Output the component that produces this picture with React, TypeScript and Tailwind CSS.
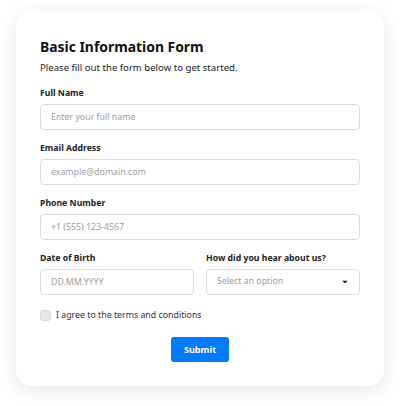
import { useState } from "react";

const labelCls = "block text-[8.7px] leading-[14px] font-bold text-[#222] mb-[4px]";
const fieldCls =
  "block w-full h-[26px] rounded-[4px] border border-[#dcdcdc] bg-white px-[10px] text-[8.8px] focus:outline-none";
const inputCls = fieldCls + " text-[#333] placeholder:text-[#9e9e9e]";

export default function App() {
  const [agree, setAgree] = useState(false);

  return (
    <div className="min-h-[406px] w-[400px] bg-white pt-[11px] px-[16px] font-['Noto_Sans',sans-serif]">
      <div className="rounded-[16px] bg-white px-[24px] pt-[24px] pb-[24px] shadow-[0_4px_20px_rgba(0,0,0,0.10)]">
        <h1 className="text-[13.9px] leading-[24px] font-bold text-[#111]">Basic Information Form</h1>
        <p className="mt-[1px] text-[9.6px] leading-[16px] text-[#222]">
          Please fill out the form below to get started.
        </p>

        <div className="mt-[10px] flex flex-col gap-[11px]">
          <div>
            <label className={labelCls}>Full Name</label>
            <input className={inputCls} placeholder="Enter your full name" />
          </div>
          <div>
            <label className={labelCls}>Email Address</label>
            <input className={inputCls} placeholder="example@domain.com" />
          </div>
          <div>
            <label className={labelCls}>Phone Number</label>
            <input className={inputCls} placeholder="+1 (555) 123-4567" />
          </div>
          <div className="grid grid-cols-2 gap-[12px]">
            <div>
              <label className={labelCls}>Date of Birth</label>
              <input className={inputCls} placeholder="DD.MM.YYYY" />
            </div>
            <div>
              <label className={labelCls}>How did you hear about us?</label>
              <div className="relative">
                <select className={fieldCls + " appearance-none text-[#9e9e9e]"} defaultValue="">
                  <option value="" disabled>
                    Select an option
                  </option>
                  <option>Friend</option>
                  <option>Search engine</option>
                  <option>Social media</option>
                </select>
                <svg
                  className="pointer-events-none absolute right-[12px] top-1/2 -translate-y-1/2"
                  width="6"
                  height="3"
                  viewBox="0 0 6 3"
                >
                  <path d="M0 0h6L3 3z" fill="#222" />
                </svg>
              </div>
            </div>
          </div>
        </div>

        <label className="mt-[12px] flex items-center gap-[5px] cursor-pointer">
          <input
            type="checkbox"
            checked={agree}
            onChange={(e) => setAgree(e.target.checked)}
            className="h-[11px] w-[11px] appearance-none rounded-[3px] border border-[#dadada] bg-[#e8e8e8] checked:bg-[#007bff]"
          />
          <span className="text-[8.8px] leading-[16px] text-[#333]">I agree to the terms and conditions</span>
        </label>

        <div className="mt-[14px] flex justify-center">
          <button className="h-[25px] w-[58px] rounded-[3px] bg-[#007bff] text-[9.1px] font-bold text-white">
            Submit
          </button>
        </div>
      </div>
    </div>
  );
}
